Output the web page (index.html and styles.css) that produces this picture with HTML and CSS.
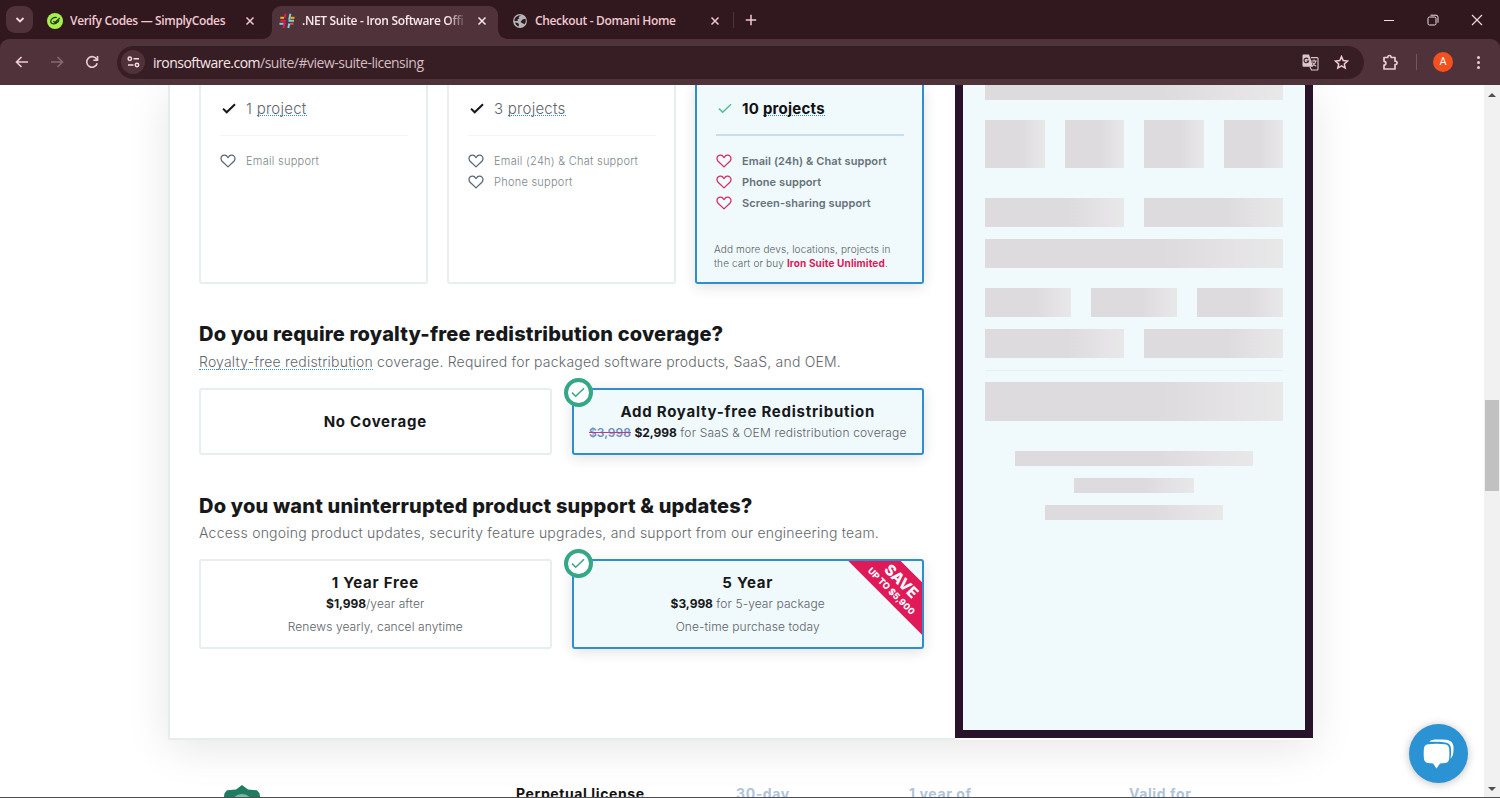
FILE: index.html
```html
<!DOCTYPE html>
<html lang="en">

<head>
    <meta charset="UTF-8">
    <meta name="viewport" content="width=device-width, initial-scale=1.0">
    <title>.NET Suite - Iron Software</title>
    <link rel="stylesheet" href="styles.css">
</head>

<body>
    <svg class="defs" width="0" height="0">
        <symbol id="heart" viewBox="0 0 16 14">
            <path d="M8 12.9 2.1 7.2C.6 5.6.7 3.3 2 2.1 3.6.6 6.2.9 7.4 2.800L8 3.600l.6-.8C9.800.9 12.400.6 14 2.100c1.300 1.200 1.400 3.500-.1 5.100z" fill="none" stroke="currentColor" stroke-width="1.300" stroke-linejoin="round"/>
        </symbol>
        <symbol id="check" viewBox="0 0 14 11">
            <path d="M1 5.600 4.700 9.300 13 1.300" fill="none" stroke="currentColor" stroke-width="var(--w, 2)"/>
        </symbol>
        <symbol id="close" viewBox="0 0 10 10">
            <path d="M1.500 1.500l7 7m0-7l-7 7" fill="none" stroke="currentColor" stroke-width="1.500"/>
        </symbol>
    </svg>

    <div class="tabs">
        <div class="tab-search">
            <svg width="10" height="8" viewBox="0 0 10 8"><path d="M1.500 2 5 5.500 8.500 2" fill="none" stroke="#f3d9dd" stroke-width="1.800"/></svg>
        </div>
        <div class="tab tab-first">
            <svg class="favicon" width="16" height="16" viewBox="0 0 16 16">
                <circle cx="8" cy="8" r="8" fill="#a6f04b"/>
                <path d="M9.800 4.500C7 3.800 3.600 5.800 3.700 8.600c.1 2.800 4.800 3 6.800.5M6.300 8.200l1.600 1.200L12.800 5M8 9.500c1.800.2 3.500-.7 4-2.300" fill="none" stroke="#22331b" stroke-width="1.200"/>
            </svg>
            <span class="tab-name name-1">Verify Codes — SimplyCodes</span>
            <svg class="tab-close" width="10" height="10"><use href="#close"/></svg>
        </div>
        <div class="tab tab-active">
            <svg class="favicon" width="16" height="16" viewBox="0 0 16 16" fill="none" stroke-width="2">
                <path d="M6.500.8 5.600 5" stroke="#e01a59"/>
                <path d="M1.300 4.800H5" stroke="#f7b500"/>
                <path d="M11.300.8 10.200 6.800" stroke="#7fd0dc"/>
                <path d="M11.500 4.800h4" stroke="#f7b500"/>
                <path d="M.5 10.800h4.300" stroke="#7fd0dc"/>
                <path d="M5.800 9.200 4.500 15" stroke="#e01a59"/>
                <path d="M10.300 10.500 9.300 15" stroke="#7fd0dc"/>
                <path d="M11 10.800h3.500" stroke="#e8484a"/>
                <path d="M1.500 7.800h5.300" stroke="#e01a59"/>
                <path d="M9.500 7.800h5.500" stroke="#7fd0dc"/>
            </svg>
            <span class="tab-name name-2">.NET Suite - Iron Software Offi</span>
            <svg class="tab-close" width="10" height="10"><use href="#close"/></svg>
        </div>
        <div class="tab tab-last">
            <svg class="favicon" width="14" height="14" viewBox="0 0 14 14">
                <circle cx="7" cy="7" r="6.900" fill="#b3b5ba"/>
                <path d="M8 1.500 5.500 3l.8 1.500-2 1L5 7H1.500C1.200 4 4 1 8 1.500zM2 8.500l3 .5 1 1.500-.5 2C4 12 2.500 10.500 2 8.500zM9.500 5.500l3-.8c.5 2 .3 4-1 5.500L10 9.500 7.500 8z" fill="#31181e"/>
            </svg>
            <span class="tab-name name-3">Checkout - Domani Home</span>
            <svg class="tab-close" width="10" height="10"><use href="#close"/></svg>
        </div>
        <div class="new-tab">
            <svg width="12" height="12" viewBox="0 0 12 12"><path d="M6 .8v10.400M.8 6h10.400" stroke="#f0c9d1" stroke-width="1.500"/></svg>
        </div>
        <div class="window-buttons">
            <svg width="12" height="12" viewBox="0 0 12 12"><path d="M1 6.500h10" stroke="#efdfe2"/></svg>
            <svg width="12" height="12" viewBox="0 0 12 12" fill="none" stroke="#efdfe2"><rect x="1" y="3" width="8" height="8" rx="1.500"/><path d="M3.500 1.200h5.500a2 2 0 0 1 2 2v5.500"/></svg>
            <svg width="12" height="12" viewBox="0 0 12 12"><path d="M1 1l10 10M11 1 1 11" stroke="#efdfe2" stroke-width="1.100"/></svg>
        </div>
    </div>

    <div class="toolbar">
        <svg class="nav-icon" width="14" height="12" viewBox="0 0 14 12"><path d="M13 6H2M6.500 1 1.500 6l5 5" fill="none" stroke="#efccd3" stroke-width="1.600"/></svg>
        <svg class="nav-icon nav-off" width="14" height="12" viewBox="0 0 14 12"><path d="M1 6h11M7.500 1l5 5-5 5" fill="none" stroke="#89686f" stroke-width="1.600"/></svg>
        <svg class="nav-icon" width="14" height="14" viewBox="0 0 14 14"><path d="M11.800 4.600A5.300 5.300 0 1 0 12.200 8.200M12.500 1v4.200H8.300" fill="none" stroke="#efccd3" stroke-width="1.600"/></svg>
        <div class="address">
            <div class="site-info">
                <svg width="13" height="12" viewBox="0 0 13 12" fill="none" stroke="#f3dde1" stroke-width="1.500"><circle cx="2.800" cy="2.800" r="1.700"/><path d="M6.500 2.800H12M1 9h5.500"/><circle cx="10" cy="9" r="1.700"/></svg>
            </div>
            <span class="url">ironsoftware.com<span class="path">/suite/#view-suite-licensing</span></span>
            <svg class="translate" width="17" height="17" viewBox="0 0 17 17">
                <path d="M1.500.5H7l1.200 3.300 2.800 9H1.500a1 1 0 0 1-1-1V1.500a1 1 0 0 1 1-1z" fill="#dcc8cc"/>
                <path d="M6.300 5.200A2.300 2.300 0 1 0 6.600 7H4.500" fill="none" stroke="#3a1f25" stroke-width="1.100"/>
                <path d="M9 3.600h6a1 1 0 0 1 1 1V15a1 1 0 0 1-1 1H9.500L8 13M9.300 7h5.500M12 5.600V7M13.800 7c-.3 2.500-2 4-3.500 5M10.500 8.500c.7 1.800 2 3 3.700 3.800" fill="none" stroke="#dcc8cc" stroke-width="1.100"/>
            </svg>
            <svg class="star" width="15" height="15" viewBox="0 0 15 15"><path d="M7.500 1.600l1.700 4 4.300.4-3.200 2.900.9 4.200-3.700-2.200-3.700 2.200.9-4.200L1.500 6l4.300-.4z" fill="none" stroke="#efccd3" stroke-width="1.500"/></svg>
        </div>
        <svg class="puzzle" width="17" height="17" viewBox="0 0 17 17"><path d="M2 3.500h3.700c-.1-2.700 3.600-2.700 3.500 0H13v3.700c2.700-.1 2.700 3.600 0 3.500V15H2v-4c2.500-.2 2.500-3.500 0-3.700z" fill="none" stroke="#efccd3" stroke-width="1.700" stroke-linejoin="round"/></svg>
        <div class="tool-sep"></div>
        <div class="avatar">A</div>
        <div class="dots"><i></i><i></i><i></i></div>
    </div>

    <div class="viewport">
        <div class="page">
            <div class="license">
                <div class="builder">
                    <div class="plans">
                        <div class="plan">
                            <div class="projects">
                                <svg class="tick" width="14" height="11"><use href="#check"/></svg>
                                <span class="count count-1">1 <u>project</u></span>
                            </div>
                            <ul class="support">
                                <li><svg class="heart" width="16" height="14"><use href="#heart"/></svg>Email support</li>
                            </ul>
                        </div>
                        <div class="plan">
                            <div class="projects">
                                <svg class="tick" width="14" height="11"><use href="#check"/></svg>
                                <span class="count">3 <u>projects</u></span>
                            </div>
                            <ul class="support">
                                <li><svg class="heart" width="16" height="14"><use href="#heart"/></svg>Email (24h) &amp; Chat support</li>
                                <li><svg class="heart" width="16" height="14"><use href="#heart"/></svg>Phone support</li>
                            </ul>
                        </div>
                        <div class="plan selected">
                            <div class="projects">
                                <svg class="tick" width="14" height="11"><use href="#check"/></svg>
                                <span class="count">10 <u>projects</u></span>
                            </div>
                            <ul class="support">
                                <li><svg class="heart" width="16" height="14"><use href="#heart"/></svg>Email (24h) &amp; Chat support</li>
                                <li><svg class="heart" width="16" height="14"><use href="#heart"/></svg>Phone support</li>
                                <li><svg class="heart" width="16" height="14"><use href="#heart"/></svg>Screen-sharing support</li>
                            </ul>
                            <p class="more">Add more devs, locations, projects in<br>the cart or buy <b>Iron Suite Unlimited</b>.</p>
                        </div>
                    </div>

                    <h2 class="q1">Do you require royalty-free redistribution coverage?</h2>
                    <p class="hint hint-1"><u>Royalty-free redistribution</u> coverage. Required for packaged software products, SaaS, and OEM.</p>
                    <div class="options">
                        <div class="option">
                            <h3 class="t-none">No Coverage</h3>
                        </div>
                        <div class="option selected">
                            <span class="badge"><svg width="14" height="11"><use href="#check"/></svg></span>
                            <h3 class="t-add">Add Royalty-free Redistribution</h3>
                            <p class="price-add"><s>$3,998</s> <b>$2,998</b> for SaaS &amp; OEM redistribution coverage</p>
                        </div>
                    </div>

                    <h2 class="q2">Do you want uninterrupted product support &amp; updates?</h2>
                    <p class="hint hint-2">Access ongoing product updates, security feature upgrades, and support from our engineering team.</p>
                    <div class="options options-tall">
                        <div class="option">
                            <h3>1 Year Free</h3>
                            <p><b>$1,998</b>/year after</p>
                            <p class="note">Renews yearly, cancel anytime</p>
                        </div>
                        <div class="option selected">
                            <span class="badge"><svg width="14" height="11"><use href="#check"/></svg></span>
                            <h3>5 Year</h3>
                            <p><b>$3,998</b> for 5-year package</p>
                            <p class="note">One-time purchase today</p>
                            <div class="ribbon-box">
                                <div class="ribbon"><span class="save">SAVE</span><span class="upto">UP TO $5,900</span></div>
                            </div>
                        </div>
                    </div>
                </div>

                <div class="cart">
                    <div class="row h15"><i></i></div>
                    <div class="row h48"><i></i><i></i><i></i><i></i></div>
                    <div class="row h30 pair"><i></i><i></i></div>
                    <div class="row h29"><i></i></div>
                    <div class="row h30 trio"><i></i><i></i><i></i></div>
                    <div class="row h29 duo"><i></i><i></i></div>
                    <div class="row total"><i></i></div>
                    <div class="row line w80"><i></i></div>
                    <div class="row line w40"><i></i></div>
                    <div class="row line w60"><i></i></div>
                </div>
            </div>

            <div class="guarantee">
                <svg class="seal" width="38" height="44" viewBox="0 0 38 44">
                    <path d="M19 0l6 4.500 9 .8 2.500 3L38 18v26H0V18L1.500 8.300l2.500-3 9-.8z" fill="#1f7c60"/>
                    <circle cx="19" cy="20" r="11" fill="#7dbba6"/>
                </svg>
                <span class="g-item g-main">Perpetual license</span>
                <span class="g-item g-days">30-day</span>
                <span class="g-item g-year">1 year of</span>
                <span class="g-item g-valid">Valid for</span>
            </div>
        </div>
        <div class="scrollbar">
            <span class="arrow-up"></span>
            <span class="thumb"></span>
            <span class="arrow-down"></span>
        </div>
        <div class="chat">
            <svg width="32" height="30" viewBox="0 0 32 30">
                <path d="M6.500 2.700C8 .8 10 .6 16 .5c6 0 9.500.3 12 2 2.500 2 2.700 5 2.500 9-.2 4-1 6.500-3.200 8.300.6-2 .9-4.500.8-8.300 0-4.500-1.300-6.800-4.500-7.800-3.500-1-10-1-17.100-1z" fill="#fff"/>
                <path d="M5 5.300c5-.8 12-.8 17 0 2.800.5 4 2 4.200 4.700.3 4 .2 7-.1 10-.3 2.500-1.700 3.700-4.200 4.100l-4.900.5-3.500 4.900-3.400-4.900-4.800-.5C2.800 23.700 1.400 22.500 1 20 .6 17 .6 13.500.9 10 1.100 7.300 2.300 5.800 5 5.300z" fill="#fff"/>
            </svg>
        </div>
    </div>
</body>

</html>
```
FILE: styles.css
```css
* {
    box-sizing: border-box;
}

body {
    margin: 0;
    height: 798px;
    overflow: hidden;
    display: flex;
    flex-direction: column;
    background: #31181e;
    font-family: Inter, "Open Sans", sans-serif;
}

h2, h3, p, ul {
    margin: 0;
    padding: 0;
}

.defs {
    display: none;
}

/* browser tabs */
.tabs {
    height: 39px;
    display: flex;
    align-items: center;
    padding-left: 6px;
    flex-shrink: 0;
    font-family: "Open Sans", sans-serif;
    color: #f0c9d1;
}

.tab-search {
    width: 27px;
    height: 27px;
    border-radius: 9px;
    background: #50333a;
    display: flex;
    align-items: center;
    justify-content: center;
}

.tab {
    height: 33px;
    margin-top: 6px;
    padding-bottom: 4px;
    display: flex;
    align-items: center;
}

.tab-first {
    width: 239px;
    padding-left: 14px;
}

.tab-active {
    position: relative;
    width: 226px;
    padding-left: 7px;
    background: #50333a;
    border-radius: 9px 9px 0 0;
    color: #fbe9ec;
}

.tab-active::before,
.tab-active::after {
    content: "";
    position: absolute;
    bottom: 0;
    width: 9px;
    height: 9px;
}

.tab-active::before {
    left: -9px;
    background: radial-gradient(circle at 0 0, transparent 8.5px, #50333a 9px);
}

.tab-active::after {
    right: -9px;
    background: radial-gradient(circle at 100% 0, transparent 8.5px, #50333a 9px);
}

.tab-last {
    width: 235px;
    padding-left: 15px;
}

.tab-name {
    margin-left: 7px;
    font-size: 12px;
    font-weight: 600;
    letter-spacing: -0.34px;
    white-space: nowrap;
    overflow: hidden;
}

.name-1 {
    width: 175px;
}

.name-2 {
    width: 165px;
    margin-right: 10px;
    -webkit-mask-image: linear-gradient(to right, #000 145px, transparent 165px);
    mask-image: linear-gradient(to right, #000 145px, transparent 165px);
}

.name-3 {
    width: 175px;
    margin-left: 8px;
}

.new-tab {
    height: 16px;
    padding: 2px 0 0 11px;
    border-left: 1px solid #50333a;
    line-height: 0;
}

.window-buttons {
    margin-left: auto;
    padding-right: 17px;
    display: flex;
    gap: 32px;
}

/* toolbar */
.toolbar {
    height: 46px;
    flex-shrink: 0;
    display: flex;
    align-items: center;
    padding-left: 15px;
    background: #50333a;
    border-radius: 9px 9px 0 0;
}

.nav-icon {
    margin-right: 21px;
}

.address {
    width: 1247px;
    height: 33px;
    margin-left: -3px;
    padding: 0 15px 0 4px;
    border-radius: 17px;
    background: #371e24;
    display: flex;
    align-items: center;
}

.site-info {
    width: 24px;
    height: 24px;
    border-radius: 50%;
    background: #50333a;
    display: flex;
    align-items: center;
    justify-content: center;
}

.url {
    margin-left: 8px;
    flex: 1;
    font-family: "Open Sans", sans-serif;
    font-size: 14px;
    letter-spacing: -0.5px;
    color: #f8e6e9;
}

.path {
    color: #d6bdc2;
}

.star {
    margin-left: 15px;
}

.puzzle {
    margin-left: 18px;
}

.tool-sep {
    width: 1px;
    height: 16px;
    margin: 0 16px 0 17px;
    background: #74565c;
}

.avatar {
    width: 20px;
    height: 20px;
    border-radius: 50%;
    background: #f4511e;
    color: #fff;
    font: 11px/20px Roboto, sans-serif;
    text-align: center;
}

.dots {
    margin-left: 24px;
    display: flex;
    flex-direction: column;
    gap: 2px;
}

.dots i {
    width: 3px;
    height: 3px;
    border-radius: 50%;
    background: #efccd3;
}

/* page */
.viewport {
    position: relative;
    flex: 1;
    display: flex;
    min-height: 0;
    background: #fff;
    border-bottom: 1px solid #505053;
}

.page {
    flex: 1;
    padding-left: 168px;
    overflow: hidden;
}

.license {
    width: 1145px;
    height: 655px;
    display: flex;
    align-items: flex-start;
    box-shadow: 0 8px 40px rgba(0, 0, 0, 0.1);
}

.builder {
    width: 787px;
    height: 655px;
    padding-left: 29px;
    border: solid #e7ecee;
    border-width: 0 0 2px 2px;
    background: #fff;
}

.plans {
    width: 725px;
    height: 199px;
    display: flex;
    gap: 19px;
}

.plan {
    flex: 1;
    padding: 13px 18px 0 19px;
    border: 2px solid #e7eef0;
    border-top: 0;
    border-radius: 0 0 3px 3px;
}

.selected {
    position: relative;
    background: #f0f9fc;
    border-color: #2e8fcb;
    box-shadow: 0 3px 14px rgba(0, 0, 0, 0.12);
}

.projects {
    height: 38px;
    display: flex;
    align-items: flex-start;
    border-bottom: 1px solid #f3f5f6;
}

.tick {
    margin: 5px 10px 0 2px;
    color: #161616;
}

.plan.selected .tick {
    --w: 1.5;
    color: #4fbf94;
}

.count {
    font-size: 15px;
    line-height: 22px;
    font-weight: 300;
    letter-spacing: 0.25px;
    color: #5f656b;
}

u {
    text-decoration: none;
    border-bottom: 1.5px dotted #2e8fcb;
}

.count u {
    display: inline-block;
    height: 18px;
}

.plan.selected .projects {
    border-bottom: 2px solid #c7deec;
}

.plan.selected .count {
    font-weight: 700;
    color: #111;
}

.support {
    padding-top: 15px;
    list-style: none;
    font-size: 11px;
    font-weight: 300;
    line-height: 21px;
    letter-spacing: 0.26px;
    color: #7d858b;
}

.support li {
    display: flex;
    align-items: center;
    white-space: nowrap;
}

.heart {
    margin: -1px 10px 0 0;
    color: #5b6975;
}

.selected .support {
    font-weight: 600;
    letter-spacing: 0.08px;
    color: #66727a;
}

.selected .heart {
    color: #d92d62;
}

.more {
    margin: 28px -12px 0 -2px;
    font-size: 10px;
    line-height: 14px;
    font-weight: 300;
    letter-spacing: 0.13px;
    color: #555c62;
    white-space: nowrap;
}

.more b {
    font-weight: 700;
    color: #db1a5a;
}

h2 {
    font-size: 20px;
    line-height: 28px;
    font-weight: 800;
    letter-spacing: 0.18px;
    color: #16181a;
    white-space: nowrap;
}

.q1 {
    margin-top: 36px;
}

.q2 {
    margin-top: 37px;
}

.hint {
    margin-top: 4px;
    font-size: 14px;
    line-height: 20px;
    font-weight: 300;
    letter-spacing: 0.2px;
    color: #62676b;
    white-space: nowrap;
}

.hint-2 {
    margin-top: 3px;
    letter-spacing: 0.23px;
}

.hint u {
    display: inline-block;
    height: 18px;
    line-height: 20px;
}

.options {
    width: 725px;
    height: 67px;
    margin-top: 16px;
    display: flex;
    gap: 20px;
}

.option {
    flex: 1;
    padding-top: 11px;
    border: 2px solid #e7eef0;
    border-radius: 3px;
    text-align: center;
}

.option.selected {
    border-color: #2e8fcb;
}

.options-tall {
    height: 90px;
}

h3 {
    font-size: 15px;
    line-height: 22px;
    font-weight: 700;
    letter-spacing: 0.75px;
    color: #16181a;
    white-space: nowrap;
}

.t-none {
    margin-top: 10px;
}

.option p {
    font-size: 12px;
    line-height: 20px;
    font-weight: 300;
    letter-spacing: 0.1px;
    color: #5d6267;
    white-space: nowrap;
}

.option .price-add {
    letter-spacing: 0.16px;
}

.option p b {
    font-weight: 700;
    letter-spacing: -0.05px;
    color: #16181a;
}

.option .note {
    margin-top: 3px;
}

s {
    font-weight: 600;
    letter-spacing: 0;
    color: #6f8fc0;
    text-decoration-color: #c03a80;
}

.badge {
    position: absolute;
    left: -10px;
    top: -12px;
    width: 29px;
    height: 29px;
    border: 4px solid #33a786;
    border-radius: 50%;
    background: #fff;
    color: #33a786;
    display: flex;
    align-items: center;
    justify-content: center;
    --w: 1.5;
}

.ribbon-box {
    position: absolute;
    top: 0;
    right: 0;
    width: 75px;
    height: 75px;
    overflow: hidden;
}

.ribbon {
    position: absolute;
    left: -5px;
    top: 5px;
    width: 112px;
    height: 37px;
    padding-top: 6px;
    transform: rotate(45deg);
    background: #e01a59;
    color: #fff;
    font-weight: 800;
    display: flex;
    flex-direction: column;
    align-items: center;
}

.save {
    font-size: 15px;
    line-height: 16px;
}

.upto {
    margin-top: 1px;
    font-size: 9px;
    line-height: 9px;
}

/* cart skeleton */
.cart {
    width: 358px;
    height: 653px;
    padding: 0 22px;
    border: 8px solid #29132a;
    border-top: 0;
    background: #f0f9fc;
}

.row {
    display: flex;
    gap: 20px;
    margin-bottom: 12px;
}

.row i {
    flex: 1;
    background: linear-gradient(to right, #dedbdf 60%, #e9e8e9);
}

.h15 {
    height: 15px;
    margin-bottom: 20px;
}

.h48 {
    height: 48px;
    margin-bottom: 30px;
}

.h29 {
    height: 29px;
    margin-bottom: 20px;
}

.h30 {
    height: 29px;
}

.duo {
    margin-bottom: 12px;
}

.total {
    height: 51px;
    padding-top: 11px;
    border-top: 1px solid #e8eff3;
    margin-bottom: 30px;
}

.line {
    height: 15px;
    margin-left: auto;
    margin-right: auto;
}

.w80 {
    width: 80%;
}

.w40 {
    width: 40%;
}

.w60 {
    width: 60%;
}

.guarantee {
    height: 60px;
    padding: 45px 0 0 55px;
    display: flex;
    align-items: flex-start;
    font-size: 14px;
    font-weight: 700;
    line-height: 18px;
    letter-spacing: 0.6px;
    color: #b0c4dc;
}

.g-item {
    white-space: nowrap;
}

.g-main {
    width: 220px;
    margin-left: 255px;
    color: #111;
}

.g-days {
    width: 173px;
}

.g-year {
    width: 220px;
}

/* scrollbar */
.scrollbar {
    width: 16px;
    display: flex;
    flex-direction: column;
    align-items: center;
    background: #f1f1f1;
}

.arrow-up {
    margin-top: 8px;
    border: 4px solid transparent;
    border-top: 0;
    border-bottom-color: #505050;
}

.thumb {
    width: 14px;
    height: 91px;
    margin-top: 303px;
    background: #c1c1c1;
}

.arrow-down {
    margin: auto 0 6px;
    border: 4px solid transparent;
    border-bottom: 0;
    border-top-color: #505050;
}

.chat {
    position: absolute;
    right: 32px;
    bottom: 14px;
    width: 59px;
    height: 59px;
    border-radius: 50%;
    background: #2b93d4;
    box-shadow: 0 1px 8px rgba(0, 0, 0, 0.25);
    display: flex;
    align-items: center;
    justify-content: center;
}
```
